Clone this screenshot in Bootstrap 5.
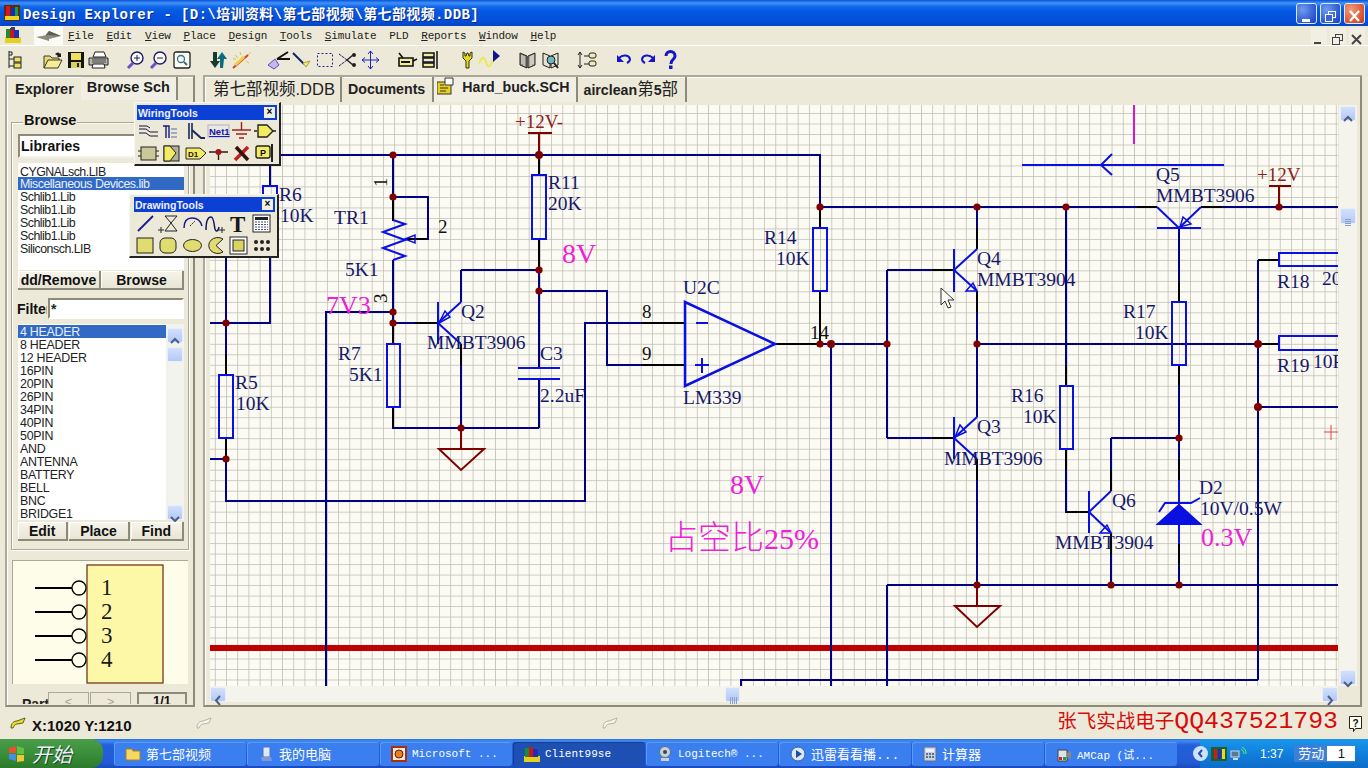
<!DOCTYPE html>
<html lang="zh">
<head>
  <meta charset="UTF-8" />
  <meta name="viewport" content="width=device-width, initial-scale=1" />
  <title>Design Explorer</title>
  <link href="https://cdn.jsdelivr.net/npm/bootstrap@5.3.3/dist/css/bootstrap.min.css" rel="stylesheet" />
  <style>
    html, body { margin: 0; width: 1368px; height: 768px; overflow: hidden; background: #ece9d8; }
    body { font-family: "Liberation Sans", "Noto Sans CJK SC", sans-serif; color: #111; position: relative; }
    .app-shell { width: 1368px; height: 768px; }

    .title-row { height: 26px; flex: none; background: linear-gradient(#0a52dc 0, #3f92f6 3px, #1065e8 7px, #0358e2 12px, #0450dc 20px, #0345c4 26px); color: #fff; padding-left: 4px; }
    .title-text { font: bold 14px "Liberation Mono", "Noto Sans CJK SC", monospace; letter-spacing: .38px; margin-left: 3px; text-shadow: 1px 1px #0a2a8a; white-space: nowrap; }
    .win-btn { width: 21px; height: 21px; border: 1px solid #dfe9fb; border-radius: 3px; background: radial-gradient(circle at 30% 30%, #6f9cf0, #2b56d0 70%, #1d3fb4); margin-left: 3px; display: block; }
    .win-btn.win-close { background: radial-gradient(circle at 30% 30%, #ee9c7c, #d9532c 70%, #b83a18); }
    .win-btns { margin-right: 3px; margin-left: auto; }

    .menu-row { height: 20px; flex: none; background: #ece9d8; border-bottom: 1px solid #fff; padding-left: 5px; }
    .arrow-box { width: 29px; height: 19px; margin-left: 13px; background: #fbfbf6; }
    .menu-item { font: 11px "Liberation Mono", monospace; letter-spacing: -.15px; color: #222; margin-left: 12.7px; }
    .menu-item.menu-first { margin-left: 5px; }
    .menu-row u { text-decoration-thickness: 1px; }
    .mdi-btn { width: 16px; height: 16px; background: #f1efe3; margin-left: 3px; display: block; }
    .mdi-btns { margin-left: auto; margin-right: 3px; }

    .tool-row { height: 29px; flex: none; padding: 0 0 2px 4px; background: #ece9d8; }
    .tool-row svg { width: 23px; height: 20px; flex: none; display: block; }
    .tool-gap { width: 14px; flex: none; }

    .work-row { height: 632px; flex: none; }
    .side-pane { width: 190px; height: 632px; margin-left: 5px; border: 2px solid; border-color: #aca899 #8c8a7a #8c8a7a #aca899; overflow: hidden; flex: none; box-shadow: inset 1px 1px #fff; }
    .side-tabs { height: 23px; padding-left: 3px; }
    .pane-tab { font: bold 14.5px/20px "Liberation Sans", sans-serif; padding: 2px 5px 0; color: #1c1c1c; white-space: nowrap; height: 23px; }
    .pane-tab.is-on { padding: 0 6px; background: #f1efe4; border-right: 2px solid #8c8a7a; margin-left: 2px; }
    .browse-group { width: 178px; height: 428px; margin: 22px 0 0 4px; border: 1px solid #aca899; box-shadow: inset 1px 1px #fff, 1px 1px #fff; padding: 11px 0 0 6px; position: relative; }
    .group-title { position: absolute; top: -11px; left: 11px; background: #ece9d8; padding: 0 1px; font: bold 14.5px "Liberation Sans", sans-serif; }
    .combo-box { width: 166px; height: 24px; background: #fff; border: 2px solid; border-color: #8c8a7a #f4f3ea #f4f3ea #8c8a7a; font: bold 14px "Liberation Sans", sans-serif; padding: 2px 1px; }
    .lib-list { width: 166px; height: 107px; margin-top: 5px; background: #fff; padding: 2px 0; border-radius: 0; }
    .lib-list .list-group-item, .part-list .list-group-item { border: 0; border-radius: 0; padding: 1px 3px 0 2px; height: 13px; line-height: 13px; font-size: 12.4px; letter-spacing: -.5px; background: transparent; color: #222; white-space: nowrap; }
    .part-list .list-group-item { letter-spacing: -.25px; }
    .lib-list .list-group-item.active, .part-list .list-group-item.active { background: #316ac5; color: #e8eefc; }
    .xp-btn { background: linear-gradient(#f6f5ec, #e8e5d4); border: 0; border-radius: 0; border-right: 2px solid #8c8a7a; border-bottom: 2px solid #8c8a7a; box-shadow: inset 1px 1px #fff; font: bold 14px "Liberation Sans", sans-serif; color: #111; padding: 0; height: 19px; line-height: 17px; }
    .btn-pair { margin-top: 1px; width: 166px; }
    .btn-pair .xp-btn { padding-top: 1px; }
    .filter-row { margin-top: 8px; height: 21px; width: 166px; }
    .filter-label { font: bold 14px "Liberation Sans", sans-serif; width: 30px; flex: none; overflow: hidden; margin-left: -1px; margin-right: 1px; white-space: nowrap; }
    .filter-input { height: 21px; padding: 0 1px; border-radius: 0; border: 2px solid; border-color: #8c8a7a #fff #fff #8c8a7a; font: bold 14px "Liberation Sans", sans-serif; background: #fff; }
    .part-box { width: 166px; height: 196px; margin-top: 5px; background: #fff; }
    .part-list { width: 148px; padding-top: 1px; flex: none; border-radius: 0; }
    .part-scroll { width: 18px; background: #f3f3ee; }
    .btn-row { margin-top: 2px; width: 166px; gap: 1px; }
    .btn-row .xp-btn { padding-top: 1px; }
    .preview-box { width: 176px; height: 124px; margin: 10px 0 0 5px; background: #fdfdea; border-left: 1px solid #aca899; border-top: 1px solid #aca899; }
    .preview-box svg { display: block; }
    .pager-row { height: 20px; overflow: hidden; padding: 8px 0 0 15px; align-items: flex-start; }
    .pager-txt { font: bold 14px/24px "Liberation Sans", sans-serif; width: 26px; color: #222; overflow: hidden; white-space: nowrap; }
    .pager-btn { width: 41px; height: 22px; border: 1px solid #aca899; background: #ece9d8; text-align: center; font-size: 13px; line-height: 18px; color: #a8a698; margin-right: 1px; }
    .pager-num { width: 50px; height: 22px; border: 2px solid #8c8a7a; border-bottom: 0; text-align: center; font: bold 13px/14px "Liberation Sans", sans-serif; margin-left: 5px; }

    .doc-pane { width: 1159px; height: 632px; margin-left: 8px; border: 2px solid; border-color: #aca899 #8c8a7a #8c8a7a #aca899; padding-left: 5px; flex: none; box-shadow: inset 1px 1px #fff; overflow: hidden; }
    .doc-tabs { height: 28px; }
    .doc-tab { font: bold 14.2px/21px "Liberation Sans", "Noto Sans CJK SC", sans-serif; color: #222; padding: 2px 7px 0 6px; height: 25px; border-right: 2px solid #8c8a7a; white-space: nowrap; }
    .doc-tab .cjk-part { font-weight: normal; font-size: 16.5px; }
    .doc-tab.tab-first { font: 16.5px/24px "Liberation Sans", "Noto Sans CJK SC", sans-serif; padding: 0 4px 0 3px; width: 132px; }
    .doc-tab.is-on { background: #f1efe4; padding: 0 6px 0 3px; display: flex; gap: 7px; align-items: flex-start; }
    .doc-body { height: 581px; }
    .sheet-svg { width: 1128px; height: 581px; display: block; flex: none; }
    .v-scroll { width: 18px; height: 581px; flex: none; background: #f4f4ec; margin-left: 1px; padding: 1px 1px 0; }
    .h-scroll { width: 1128px; height: 16px; background: #f4f4ec; }
    .sb-btn { width: 16px; height: 15px; background: linear-gradient(#d3e0fc, #b4c8f6); border: 1px solid #e9eefb; border-radius: 2px; display: block; flex: none; }
    .sb-thumb-v { margin-top: 87px; height: 16px; }
    .sb-thumb-h { margin-left: 499px; width: 15px; }
    .sb-track-end { margin-top: auto; }
    .v-scroll .sb-track-end { margin-bottom: 1px; }

    .status-row { height: 32px; flex: none; padding-left: 10px; }
    .coord-text { font: bold 15px "Liberation Sans", sans-serif; margin: 4px 0 0 6px; width: 164px; white-space: nowrap; }
    .status-gap { width: 390px; }
    .promo-text { font: 24.8px/28px "Liberation Mono", "Noto Sans CJK SC", monospace; color: #d80a0a; margin-left: auto; margin-bottom: 3px; white-space: nowrap; }
    .promo-text .cjk-part { font-size: 19.5px; }
    .help-ico { margin: 0 5px 0 10px; display: block; }

    .task-row { height: 29px; flex: none; background: linear-gradient(#2a6fe4 0, #3d8cf2 2px, #2460dc 6px, #225ad4 24px, #1a48b8); color: #fff; }
    .start-btn { width: 103px; height: 29px; background: linear-gradient(#4a9c4a, #3a8f3a 50%, #2c7a2c); border-radius: 0 12px 12px 0; font: italic 20px "Noto Sans CJK SC", sans-serif; padding-left: 8px; gap: 6px; color: #eef; text-shadow: 1px 1px #1c4c1c; flex: none; margin-right: 11px; }
    .task-btn { width: 132px; height: 24px; flex: none; margin-right: 1px; background: #3a7ef0; border-radius: 3px; box-shadow: inset 1px 1px #5a9af8; padding-left: 11px; gap: 5px; font: 11px "Liberation Mono", "Noto Sans CJK SC", monospace; white-space: nowrap; overflow: hidden; color: #fff; }
    .task-btn .cjk-txt { font-size: 13px; }
    .task-btn.is-on { background: #1e50b4; box-shadow: inset 1px 1px #143c90; }
    .tray-box { margin-left: auto; width: 168px; height: 29px; background: linear-gradient(#1a96ec, #1080dc 50%, #0e6cc8); gap: 3px; font: 12px "Liberation Sans", "Noto Sans CJK SC", sans-serif; flex: none; }
    .tray-arrow { width: 15px; height: 15px; border-radius: 50%; background: #cfe2fb; margin-left: -7px; }
    .tray-time { margin-left: 10px; }
    .ime-box { background: #3d7ed8; padding: 0 0 0 4px; height: 17px; line-height: 17px; font-size: 13px; width: 61px; margin-left: 8px; white-space: nowrap; flex: none; }
    .ime-num { background: #fff; color: #111; width: 28px; text-align: center; height: 15px; line-height: 15px; margin-top: 1px; margin-left: 3px; flex: none; }

    .float-win { position: absolute; background: #ece9d8; border: 1px solid #f8f7f0; border-right: 2px solid #222; border-bottom: 2px solid #222; padding: 2px; z-index: 5; }
    .float-wire { left: 134px; top: 102px; width: 147px; height: 64px; }
    .float-draw { left: 129px; top: 194px; width: 150px; height: 64px; padding-left: 4px; }
    .float-head { height: 15px; background: #0c40d4; color: #f0f2ff; font: bold 10.5px "Liberation Sans", sans-serif; padding: 0 1px; }
    .float-x { width: 11px; height: 11px; background: #f1efe3; color: #000; font: bold 10px/10px "Liberation Sans", sans-serif; text-align: center; margin-left: auto; margin-right: 1px; }
    .float-icons { display: grid; grid-template-columns: repeat(6, 23.3px); grid-auto-rows: 21.5px; padding: 1px 0 0 0; }
    .float-icons svg { width: 23px; height: 21px; display: block; }
  </style>
</head>
<body>
  <div class="app-shell d-flex flex-column">

    <div class="title-row d-flex align-items-center">
      <svg width="16" height="16" viewBox="0 0 16 16"><rect width="16" height="16" fill="#5c2a10"/><rect x="2" y="1" width="4" height="11" fill="#d81818"/><rect x="7" y="3" width="4" height="9" fill="#1828c8"/><rect x="1" y="11" width="14" height="4" fill="#e8d820"/><rect x="11" y="2" width="3" height="9" fill="#18a038"/></svg>
      <span class="title-text">Design Explorer - [D:\培训资料\第七部视频\第七部视频.DDB]</span>
      <div class="win-btns d-flex">
        <span class="win-btn"><svg width="19" height="19" viewBox="0 0 19 19"><rect x="5" y="12" width="8" height="3" fill="#fff"/></svg></span>
        <span class="win-btn"><svg width="19" height="19" viewBox="0 0 19 19" fill="none" stroke="#fff"><rect x="7.5" y="4.5" width="7" height="6"/><rect x="4.5" y="7.5" width="7" height="7" fill="#3a64d8"/></svg></span>
        <span class="win-btn win-close"><svg width="19" height="19" viewBox="0 0 19 19" stroke="#fff" stroke-width="2.4"><path d="M5 4l9 10M14 4l-9 10"/></svg></span>
      </div>
    </div>

    <div class="menu-row d-flex align-items-center">
      <svg width="16" height="17" viewBox="0 0 16 17"><rect y="10" width="16" height="6" fill="#e4d020"/><rect x="1" y="2" width="4" height="9" fill="#1c8c30"/><rect x="5" y="1" width="4" height="10" fill="#c81818"/><rect x="9" y="3" width="5" height="8" fill="#2030b0"/><rect x="6" y="0" width="4" height="3" fill="#304080"/></svg>
      <span class="arrow-box d-flex align-items-center justify-content-center"><svg width="27" height="14" viewBox="0 0 27 14"><path d="M1 8l9-1 4-5 12 5-12 3v2z" fill="#8c8a7e"/><path d="M1 8l9-1 4-5 12 5-13-1z" fill="#5e5c50"/></svg></span>
      <span class="menu-item menu-first"><u>F</u>ile</span>
      <span class="menu-item"><u>E</u>dit</span>
      <span class="menu-item"><u>V</u>iew</span>
      <span class="menu-item"><u>P</u>lace</span>
      <span class="menu-item"><u>D</u>esign</span>
      <span class="menu-item"><u>T</u>ools</span>
      <span class="menu-item"><u>S</u>imulate</span>
      <span class="menu-item">PLD</span>
      <span class="menu-item"><u>R</u>eports</span>
      <span class="menu-item"><u>W</u>indow</span>
      <span class="menu-item"><u>H</u>elp</span>
      <div class="mdi-btns d-flex">
        <span class="mdi-btn"><svg width="16" height="16" viewBox="0 0 16 16"><rect x="3" y="10" width="7" height="2" fill="#444"/></svg></span>
        <span class="mdi-btn"><svg width="16" height="16" viewBox="0 0 16 16" fill="none" stroke="#444"><rect x="5.5" y="2.5" width="7" height="6"/><rect x="2.5" y="5.5" width="7" height="7" fill="#f1efe3"/></svg></span>
        <span class="mdi-btn"><svg width="16" height="16" viewBox="0 0 16 16" stroke="#444" stroke-width="2"><path d="M3 3l9 9M12 3l-9 9"/></svg></span>
      </div>
    </div>

    <div class="tool-row d-flex align-items-center">
      <svg viewBox="0 0 23 20" fill="none"><path d="M5 1v17M5 2h3v3H5M5 9h6M5 16h6" stroke="#222"/><rect x="10" y="7" width="7" height="5" fill="#f0e060" stroke="#222"/><rect x="10" y="13" width="7" height="5" fill="#f0e060" stroke="#222"/></svg>
      <span class="tool-gap"></span>
      <svg viewBox="0 0 23 20"><path d="M3 6h6l2 2h7v3H7l-4 7z" fill="#e8d878" stroke="#3c3c20"/><path d="M3 18l4-8h14l-4 8z" fill="#f6ec98" stroke="#3c3c20"/><path d="M14 4c2-2 4-2 5 0l1-1v4h-4l1-1c-1-1-2-1-3-2z" fill="#202020"/></svg>
      <svg viewBox="0 0 23 20"><rect x="4" y="2" width="16" height="16" fill="#151515"/><rect x="7" y="3" width="10" height="7" fill="#f0e060"/><rect x="7" y="12" width="10" height="6" fill="#d8d060"/><rect x="13" y="13" width="2" height="4" fill="#222"/></svg>
      <svg viewBox="0 0 23 20"><path d="M6 7l2-5h9l2 5z" fill="#fff" stroke="#222"/><path d="M2 8h19v7H2z" fill="#b8b8b0" stroke="#222"/><path d="M6 14l-1 4h13l-1-4z" fill="#fff" stroke="#222"/><path d="M5 10h14M5 12h14" stroke="#444"/></svg>
      <span class="tool-gap"></span>
      <svg viewBox="0 0 23 20" fill="none"><circle cx="13" cy="8" r="6" stroke="#1c1c68" stroke-width="1.4" fill="#fbfbf3"/><path d="M10 8h6M13 5v6" stroke="#1c1c68"/><path d="M9 13l-5 5" stroke="#6a50c8" stroke-width="3"/></svg>
      <svg viewBox="0 0 23 20" fill="none"><circle cx="13" cy="8" r="6" stroke="#1c1c68" stroke-width="1.4" fill="#fbfbf3"/><path d="M10 8h6" stroke="#1c1c68"/><path d="M9 13l-5 5" stroke="#6a50c8" stroke-width="3"/></svg>
      <svg viewBox="0 0 23 20" fill="none"><rect x="4" y="2" width="16" height="16" rx="2" stroke="#222" stroke-width="1.3" fill="#fbfbf3"/><circle cx="11" cy="9" r="3.5" stroke="#347090" stroke-width="1.3"/><path d="M14 12l3 3" stroke="#347090" stroke-width="2"/></svg>
      <span class="tool-gap"></span>
      <svg viewBox="0 0 23 20"><path d="M6 2h4v9h3l-5 7-5-7h3z" fill="#143c28"/><path d="M16 18h-3V9h-3l5-7 5 7h-3z" fill="#0c6c80"/></svg>
      <svg viewBox="0 0 23 20" fill="none"><path d="M3 18L18 5" stroke="#d04030" stroke-width="2"/><path d="M5 15l9-8" stroke="#f0d040" stroke-width="3"/><path d="M5 5l3 3M10 2l1 3M19 13l-3-2M3 9h3M21 2l-3 3" stroke="#e0c040"/></svg>
      <span class="tool-gap"></span>
      <svg viewBox="0 0 23 20" fill="none"><path d="M1 15l7-6 4 6-5 4z" fill="#c8b8f0" stroke="#6048b8"/><path d="M10 9l11-7M10 9h13" stroke="#111" stroke-width="2"/></svg>
      <svg viewBox="0 0 23 20" fill="none"><path d="M3 3l11 11" stroke="#14206c" stroke-width="2"/><path d="M13 13l3 4 4-6z" fill="#f0ec70" stroke="#a8a050"/></svg>
      <svg viewBox="0 0 23 20" fill="none"><rect x="4.5" y="3.5" width="15" height="13" stroke="#2020a0" stroke-dasharray="2 2"/></svg>
      <svg viewBox="0 0 23 20" fill="none"><path d="M3 4l8 6-8 6" stroke="#888"/><path d="M3 4l8 6M3 16l8-6" stroke="#2020a0" stroke-dasharray="2 2"/><path d="M11 10l6-5M11 10l6 5" stroke="#222" stroke-width="1.5"/><circle cx="18" cy="5" r="2" fill="#222"/><circle cx="18" cy="15" r="2" fill="#222"/></svg>
      <svg viewBox="0 0 23 20" fill="none" stroke="#2020c8"><path d="M11.5 1v18M3 10h17"/><path d="M9 4l2.5-3L14 4M9 16l2.5 3 2.5-3M6 7.5L3 10l3 2.5M17 7.5l3 2.500-3 2.500"/></svg>
      <span class="tool-gap"></span>
      <svg viewBox="0 0 23 20" fill="none"><path d="M3 8h14v8H3z" fill="#f4ec98" stroke="#111" stroke-width="1.6"/><path d="M5 12h9" stroke="#111" stroke-width="2"/><path d="M3 3l4 5M17 11l4-2" stroke="#111" stroke-width="1.6"/></svg>
      <svg viewBox="0 0 23 20" fill="none" stroke="#111" stroke-width="1.5"><rect x="4" y="3" width="11" height="4" fill="#f4ec98"/><rect x="4" y="8" width="11" height="4" fill="#e8e8d8"/><rect x="4" y="13" width="11" height="4" fill="#f4ec98"/><path d="M18 1v18"/></svg>
      <span class="tool-gap"></span>
      <svg viewBox="0 0 23 20"><path d="M7 2v6l3 3v7h3v-7l3-3V2l-2 1v3h-1l-1-3h-1l-1 3H9V3z" fill="#e8d820" stroke="#353510"/></svg>
      <svg viewBox="0 0 23 20" fill="none"><path d="M0 14c3-8 5-8 7-2s4 6 7-2" stroke="#ece850" stroke-width="2"/><path d="M14 0l7 6-7 6z" fill="#12128c"/></svg>
      <span class="tool-gap"></span>
      <svg viewBox="0 0 23 20"><path d="M4 3l7 3v12l-7-3z" fill="#8c8a7a" stroke="#222"/><path d="M19 3l-7 3v12l7-3z" fill="#a8a698" stroke="#222"/><path d="M6 5v9M8 6v10M17 5v9M15 6v10" stroke="#eee"/></svg>
      <svg viewBox="0 0 23 20" fill="none"><path d="M4 3l7 3v12l-7-3zM19 3l-7 3v12l7-3z" stroke="#222" fill="#e4e2d0"/><circle cx="12" cy="10" r="4" fill="#6fb6c0" stroke="#222"/><path d="M15 13l4 5" stroke="#222" stroke-width="2"/></svg>
      <span class="tool-gap"></span>
      <svg viewBox="0 0 23 20" fill="none" stroke="#222"><path d="M4 2v16M2 5l2-3 2 3M2 15l2 3 2-3"/><path d="M8 6h5M8 14h5"/><rect x="13" y="3" width="7" height="5" rx="2" fill="#f0ecb0"/><rect x="13" y="11" width="7" height="5" rx="2" fill="#f0ecb0"/></svg>
      <span class="tool-gap"></span>
      <svg viewBox="0 0 23 20" fill="none"><path d="M6 8c4-4 10-3 11 1 0 2-1 3-3 4" stroke="#1414c8" stroke-width="2"/><path d="M4 5v7h7z" fill="#1414c8"/></svg>
      <svg viewBox="0 0 23 20" fill="none"><path d="M17 8C13 4 7 5 6 9c0 2 1 3 3 4" stroke="#1414c8" stroke-width="2"/><path d="M19 5v7h-7z" fill="#1414c8"/></svg>
      <svg viewBox="0 0 23 20" fill="none"><path d="M7 6c0-6 9-6 9 0 0 4-4 3-4 8" stroke="#1414c8" stroke-width="3"/><rect x="10" y="15.500" width="3.500" height="3.500" fill="#1414c8"/></svg>
    </div>

    <div class="work-row d-flex">
      <aside class="side-pane">
        <div class="side-tabs d-flex align-items-start">
          <span class="pane-tab">Explorer</span>
          <span class="pane-tab is-on">Browse Sch</span>
        </div>
        <div class="browse-group">
          <span class="group-title">Browse</span>
          <div class="combo-box">Libraries</div>
          <div class="lib-list list-group">
            <div class="list-group-item">CYGNALsch.LIB</div>
            <div class="list-group-item active">Miscellaneous Devices.lib</div>
            <div class="list-group-item">Schlib1.Lib</div>
            <div class="list-group-item">Schlib1.Lib</div>
            <div class="list-group-item">Schlib1.Lib</div>
            <div class="list-group-item">Schlib1.Lib</div>
            <div class="list-group-item">Siliconsch.LIB</div>
          </div>
          <div class="btn-pair d-flex">
            <button class="btn xp-btn w-50">dd/Remove</button>
            <button class="btn xp-btn w-50">Browse</button>
          </div>
          <div class="filter-row d-flex align-items-center">
            <span class="filter-label">Filter</span>
            <input class="form-control filter-input" value="*" />
          </div>
          <div class="part-box d-flex">
            <div class="part-list list-group">
              <div class="list-group-item active">4 HEADER</div>
              <div class="list-group-item">8 HEADER</div>
              <div class="list-group-item">12 HEADER</div>
              <div class="list-group-item">16PIN</div>
              <div class="list-group-item">20PIN</div>
              <div class="list-group-item">26PIN</div>
              <div class="list-group-item">34PIN</div>
              <div class="list-group-item">40PIN</div>
              <div class="list-group-item">50PIN</div>
              <div class="list-group-item">AND</div>
              <div class="list-group-item">ANTENNA</div>
              <div class="list-group-item">BATTERY</div>
              <div class="list-group-item">BELL</div>
              <div class="list-group-item">BNC</div>
              <div class="list-group-item">BRIDGE1</div>
            </div>
            <div class="part-scroll d-flex flex-column align-items-center pt-1">
              <span class="sb-btn"><svg width="14" height="13" viewBox="0 0 14 13" fill="none" stroke="#4a5e88" stroke-width="2"><path d="M3 8l4-4 4 4"/></svg></span>
              <span class="sb-btn mt-1"></span>
              <span class="sb-btn sb-track-end"><svg width="14" height="13" viewBox="0 0 14 13" fill="none" stroke="#4a5e88" stroke-width="2"><path d="M3 5l4 4 4-4"/></svg></span>
            </div>
          </div>
          <div class="btn-row d-flex">
            <button class="btn xp-btn flex-fill">Edit</button>
            <button class="btn xp-btn flex-fill">Place</button>
            <button class="btn xp-btn flex-fill">Find</button>
          </div>
        </div>
        <div class="preview-box">
          <svg width="176" height="124" viewBox="12 560 176 124">
            <rect x="86" y="564" width="76" height="118" fill="#fdf8a8" stroke="#7a3418" stroke-width="1.300"/>
            <g stroke="#000" stroke-width="2" fill="#fdfdea">
              <path d="M34 587h37M34 611h37M34 635h37M34 659h37"/>
              <circle cx="78" cy="587" r="7" stroke-width="1.300"/><circle cx="78" cy="611" r="7" stroke-width="1.300"/><circle cx="78" cy="635" r="7" stroke-width="1.300"/><circle cx="78" cy="659" r="7" stroke-width="1.300"/>
            </g>
            <g font-family="Liberation Serif, serif" font-size="23" fill="#1a1a1a">
              <text x="100" y="594">1</text><text x="100" y="618">2</text><text x="100" y="642">3</text><text x="100" y="666">4</text>
            </g>
          </svg>
        </div>
        <div class="pager-row d-flex">
          <span class="pager-txt">Part</span>
          <span class="pager-btn">&lt;</span>
          <span class="pager-btn">&gt;</span>
          <span class="pager-num">1/1</span>
        </div>
      </aside>

      <section class="doc-pane">
        <div class="doc-tabs d-flex align-items-start">
          <span class="doc-tab tab-first">第七部视频.DDB</span>
          <span class="doc-tab">Documents</span>
          <span class="doc-tab is-on">
            <svg width="18" height="18" viewBox="0 0 18 18"><rect y="5" width="14" height="12" fill="#e8d020" stroke="#333"/><path d="M8 1h8v7H8z" fill="#fff" stroke="#333"/><path d="M3 8h4M3 11h8M3 14h6" stroke="#333"/></svg>
            <span>Hard_buck.SCH</span>
          </span>
          <span class="doc-tab">airclean<span class="cjk-part">第</span>5<span class="cjk-part">部</span></span>
        </div>
        <div class="doc-body d-flex">
          <svg class="sheet-svg" viewBox="210 105 1128 581" fill="none">
            <defs>
              <pattern id="sheetGrid" patternUnits="userSpaceOnUse" x="214.790" y="102.550" width="11.210" height="10.490">
                <path d="M0 0V10.490M0 0H11.210" stroke="#bcbcb2" stroke-width="1.500"/>
              </pattern>
            </defs>
            <rect x="210" y="105" width="1128" height="581" fill="#fbfbf3"/>
            <rect x="210" y="105" width="1128" height="581" fill="url(#sheetGrid)"/>

            <path d="M210 648H1338" stroke="#c00000" stroke-width="6"/>
            <path d="M1134 105V144" stroke="#e010d0" stroke-width="2"/>
            <path d="M1022 165H1224M1112 154l-11 11 11 10" stroke="#0a10e0" stroke-width="2"/>
            <path d="M1331 425v15M1324 432h14" stroke="#e84040" stroke-width="1"/>

            <!-- nets -->
            <path stroke="#000080" stroke-width="2" d="
              M210 155H820V228
              M820 207H1157M1201 207H1338
              M977 207V249M977 291V417M977 459V585
              M1066 207V386M1066 449V512H1089
              M775 344H887M887 270V438M887 270H954M887 438H954
              M977 344H1279
              M1258 260V680M1258 260H1279M1258 407H1338
              M741 686V680H1258
              M831 344V686M887 585V686M887 585H1338
              M226 258V375M226 438V501H585V323H685
              M210 323H270V258M210 459H226M270 165V186
              M393 155V221M393 197H428V239H405M393 260V344M393 407V428H539
              M326 686V312H393M393 323H438
              M539 155V175M539 239V368M539 379V428
              M461 270H539M461 270V302M461 344V449
              M539 291H607V365H685
              M1179 228V302M1179 365V505M1179 524V585
              M1111 438H1179M1111 438V491M1111 533V585
              M820 291V344"/>

            <!-- pin stubs -->
            <path stroke="#000" stroke-width="2" d="
              M539 155V175M539 239V270
              M393 197V221M393 323V344M393 407V428
              M415 323H438M461 344V365
              M226 354V375M226 438V459
              M820 207V228M820 291V344
              M642 323H685M642 365H685M775 344H820
              M932 270H954M932 438H954
              M977 228V249M977 291V312M977 459V480
              M1137 207H1157M1201 207H1222
              M1179 281V302M1179 365V386
              M1258 260H1279M1258 344H1279
              M1066 365V386M1066 449V470M1066 512H1089
              M1111 470V491M1111 533V554
              M1179 459V480M1179 544V565
              M405 239H428"/>

            <!-- parts -->
            <g stroke="#0a10e0" stroke-width="2">
              <rect x="219" y="375" width="14" height="63" fill="none"/>
              <rect x="263" y="186" width="14" height="63"/>
              <rect x="532" y="175" width="14" height="64"/>
              <rect x="387" y="344" width="13" height="63"/>
              <rect x="813" y="228" width="14" height="63"/>
              <rect x="1172" y="302" width="14" height="63"/>
              <rect x="1060" y="386" width="13" height="63"/>
              <path d="M1338 253H1279V266H1338M1338 336H1279V350H1338"/>
              <path d="M393 220l12 4-22 8 22 8-22 8 22 8-12 4" stroke-width="2"/>
              <path d="M405 239l10-4v8z" stroke-width="1.500"/>
              <path d="M518 368H560M518 379H560"/>
              <path d="M685 302V386L775 344Z" stroke-width="2.500"/>
              <path d="M696 323H708M702 358V373M695 365H709" stroke-width="2"/>
              <!-- Q2 -->
              <path d="M438 302V344M438 323L461 302M438 323L461 344"/>
              <path d="M439 323l11-6-5-6z" stroke-width="1.500"/>
              <!-- Q3 -->
              <path d="M954 417V459M954 438L977 417M954 438L977 459"/>
              <path d="M955 437l11-5-6-7z" stroke-width="1.500"/>
              <!-- Q4 -->
              <path d="M954 249V292M954 270L977 249M954 270L977 291"/>
              <path d="M977 291h-11l7-8z" stroke-width="1.500"/>
              <!-- Q5 -->
              <path d="M1157 228H1201M1157 207L1179 228M1201 207L1179 228"/>
              <path d="M1180 227l3-10 8 7z" stroke-width="1.500"/>
              <!-- Q6 -->
              <path d="M1089 491V533M1089 512L1111 491M1089 512L1111 533"/>
              <path d="M1111 533h-11l7-8z" stroke-width="1.500"/>
              <!-- D2 -->
              <path d="M1179 480V505M1179 524V544M1159 512l6-9h26l9-5"/>
              <path d="M1158 524H1200L1179 505Z" fill="#0a10e0"/>
            </g>

            <!-- supply and ground -->
            <g stroke="#7f0000" stroke-width="2">
              <path d="M539 155V133M528 133H552M1279 207V186M1269 186H1291"/>
              <path d="M461 428V449M439 449H484L461 470ZM977 585V606M955 606H1000L977 627Z"/>
            </g>

            <!-- junctions -->
            <g fill="#800000">
              <circle cx="393" cy="155" r="3.600"/><circle cx="539" cy="155" r="4"/>
              <circle cx="393" cy="197" r="3.600"/><circle cx="820" cy="207" r="3.600"/>
              <circle cx="977" cy="207" r="3.600"/><circle cx="1066" cy="207" r="3.600"/>
              <circle cx="1279" cy="207" r="3.600"/><circle cx="539" cy="270" r="3.600"/>
              <circle cx="539" cy="291" r="3.600"/><circle cx="393" cy="312" r="3.600"/>
              <circle cx="393" cy="323" r="3.600"/><circle cx="226" cy="323" r="3.600"/>
              <circle cx="820" cy="344" r="3.600"/><circle cx="831" cy="344" r="4"/>
              <circle cx="887" cy="344" r="3.600"/><circle cx="977" cy="344" r="3.600"/>
              <circle cx="1258" cy="344" r="4"/><circle cx="1258" cy="407" r="4"/>
              <circle cx="461" cy="428" r="3.600"/><circle cx="1179" cy="438" r="3.600"/>
              <circle cx="226" cy="459" r="3.600"/><circle cx="977" cy="585" r="3.600"/>
              <circle cx="1111" cy="585" r="3.600"/><circle cx="1179" cy="585" r="3.600"/>
            </g>

            <!-- labels -->
            <g font-family="Liberation Serif, serif" font-size="19.500" fill="#17176a" stroke="none">
              <text x="279" y="201">R6</text><text x="280" y="222">10K</text>
              <text x="334" y="224">TR1</text><text x="345" y="276">5K1</text>
              <text x="548" y="189">R11</text><text x="548" y="210">20K</text>
              <text x="461" y="318">Q2</text><text x="427" y="349">MMBT3906</text>
              <text x="338" y="360">R7</text><text x="349" y="381">5K1</text>
              <text x="235" y="389">R5</text><text x="236" y="410">10K</text>
              <text x="540" y="360">C3</text><text x="540" y="402">2.2uF</text>
              <text x="683" y="294">U2C</text><text x="683" y="404">LM339</text>
              <text x="764" y="244">R14</text><text x="776" y="265">10K</text>
              <text x="977" y="265">Q4</text><text x="977" y="286">MMBT3904</text>
              <text x="1156" y="181">Q5</text><text x="1156" y="202">MMBT3906</text>
              <text x="1277" y="288">R18</text><text x="1322" y="285">20</text>
              <text x="1123" y="318">R17</text><text x="1135" y="339">10K</text>
              <text x="1277" y="372">R19</text><text x="1313" y="368">10R</text>
              <text x="1011" y="402">R16</text><text x="1023" y="423">10K</text>
              <text x="977" y="433">Q3</text><text x="944" y="465">MMBT3906</text>
              <text x="1112" y="507">Q6</text><text x="1055" y="549">MMBT3904</text>
              <text x="1199" y="494">D2</text><text x="1200" y="515">10V/0.5W</text>
            </g>
            <g font-family="Liberation Serif, serif" font-size="19" fill="#111" stroke="none">
              <text x="438" y="233">2</text><text x="642" y="318">8</text><text x="642" y="360">9</text><text x="810" y="339">14</text>
              <text transform="rotate(-90 387 187)" x="387" y="187">1</text>
              <text transform="rotate(-90 387 303)" x="387" y="303">3</text>
            </g>
            <g font-family="Liberation Serif, serif" font-size="19" fill="#8c2020" stroke="none">
              <text x="515" y="128">+12V-</text><text x="1257" y="181">+12V</text>
            </g>
            <g font-family="Liberation Serif, 'Noto Sans CJK SC', serif" fill="#ee20d8" stroke="none">
              <text x="326" y="314" font-size="26">7V3</text>
              <text x="562" y="263" font-size="28">8V</text>
              <text x="730" y="494" font-size="28">8V</text>
              <text x="1201" y="546" font-size="26">0.3V</text>
              <text x="665" y="549" font-size="33" font-weight="300">占空比<tspan font-size="30">25%</tspan></text>
            </g>
            <!-- mouse cursor -->
            <path d="M941 288v17l4-4 3 7 3-1-3-7h6z" fill="#fbfbf3" stroke="#333" stroke-width="1"/>
          </svg>
          <div class="v-scroll d-flex flex-column">
            <span class="sb-btn"><svg width="14" height="13" viewBox="0 0 14 13" fill="none" stroke="#4a5e88" stroke-width="2"><path d="M3 8l4-4 4 4"/></svg></span>
            <span class="sb-btn sb-thumb-v"><svg width="14" height="14" viewBox="0 0 14 14" stroke="#8aa0d0"><path d="M4 4.500h6M4 6.500h6M4 8.500h6M4 10.500h6"/></svg></span>
            <span class="sb-btn sb-track-end"><svg width="14" height="13" viewBox="0 0 14 13" fill="none" stroke="#4a5e88" stroke-width="2"><path d="M3 5l4 4 4-4"/></svg></span>
          </div>
        </div>
        <div class="h-scroll d-flex align-items-center">
          <span class="sb-btn"><svg width="14" height="13" viewBox="0 0 14 13" fill="none" stroke="#4a5e88" stroke-width="2"><path d="M9 2L5 6.500 9 11"/></svg></span>
          <span class="sb-btn sb-thumb-h"><svg width="14" height="13" viewBox="0 0 14 13" stroke="#8aa0d0"><path d="M4.500 3v7M6.500 3v7M8.500 3v7M10.500 3v7"/></svg></span>
          <span class="sb-btn ms-auto"><svg width="14" height="13" viewBox="0 0 14 13" fill="none" stroke="#4a5e88" stroke-width="2"><path d="M5 2l4 4.500L5 11"/></svg></span>
        </div>
      </section>
    </div>

    <div class="status-row d-flex align-items-center">
      <svg width="16" height="12" viewBox="0 0 16 12"><path d="M1 11c0-5 3-7 6-7l8-3-2 5-6 1c-2 0-3 2-4 4z" fill="#e8e020" stroke="#3c3c10" stroke-width=".8"/></svg>
      <span class="coord-text">X:1020 Y:1210</span>
      <svg width="16" height="12" viewBox="0 0 16 12"><path d="M1 11c0-5 3-7 6-7l8-3-2 5-6 1c-2 0-3 2-4 4z" fill="#f4f3ea" stroke="#a8a698" stroke-width=".8"/></svg>
      <span class="status-gap"></span>
      <svg width="16" height="12" viewBox="0 0 16 12"><path d="M1 11c0-5 3-7 6-7l8-3-2 5-6 1c-2 0-3 2-4 4z" fill="#f4f3ea" stroke="#a8a698" stroke-width=".8"/></svg>
      <span class="promo-text"><span class="cjk-part">张飞实战电子</span>QQ437521793</span>
      <svg class="help-ico" width="15" height="17" viewBox="0 0 15 17"><path d="M1.500 1.500h12v12h-6l-2 3v-3h-4z" fill="#fffff0" stroke="#222"/><text x="4.500" y="11.500" font-size="10" font-weight="bold" font-family="Liberation Sans" fill="#111">?</text></svg>
    </div>

    <div class="task-row d-flex align-items-center">
      <div class="start-btn d-flex align-items-center">
        <svg width="18" height="18" viewBox="0 0 18 18"><path d="M1 3l7-2v7H1z" fill="#e85030"/><path d="M9 1l7 2v6H9z" fill="#60c040"/><path d="M1 9h7v7l-7-2z" fill="#4090e8"/><path d="M9 10h7v6l-7 1z" fill="#f0c830"/></svg>
        <span>开始</span>
      </div>
      <div class="task-btn d-flex align-items-center"><svg width="16" height="14" viewBox="0 0 16 14"><path d="M1 2h6l1 2h7v9H1z" fill="#f4d860" stroke="#a88020"/></svg><span class="cjk-txt">第七部视频</span></div>
      <div class="task-btn d-flex align-items-center"><svg width="16" height="16" viewBox="0 0 16 16"><rect x="5" y="1" width="7" height="10" fill="#dfe8f8" stroke="#5070c0"/><path d="M3 11h10l1 4H4z" fill="#8098d8"/></svg><span class="cjk-txt">我的电脑</span></div>
      <div class="task-btn d-flex align-items-center"><svg width="16" height="16" viewBox="0 0 16 16"><rect x="1" y="1" width="14" height="14" fill="#f4e8d8" stroke="#a83010" stroke-width="2"/><circle cx="8" cy="8" r="4" fill="#e88020" stroke="#602010"/></svg><span>Microsoft ...</span></div>
      <div class="task-btn is-on d-flex align-items-center"><svg width="16" height="16" viewBox="0 0 16 16"><rect y="10" width="16" height="6" fill="#e4d020"/><rect x="1" y="2" width="4" height="9" fill="#1c8c30"/><rect x="5" y="1" width="4" height="10" fill="#c81818"/><rect x="9" y="3" width="5" height="8" fill="#2030b0"/></svg><span>Client99se</span></div>
      <div class="task-btn d-flex align-items-center"><svg width="16" height="16" viewBox="0 0 16 16"><circle cx="8" cy="6" r="5.500" fill="#c8d0d8" stroke="#687078"/><circle cx="8" cy="6" r="2" fill="#304860"/><rect x="4" y="12" width="8" height="3" fill="#c8d0d8"/></svg><span>Logitech® ...</span></div>
      <div class="task-btn d-flex align-items-center"><svg width="16" height="16" viewBox="0 0 16 16"><circle cx="8" cy="8" r="7" fill="#dce8f8" stroke="#3860a0"/><path d="M6 4l6 4-6 4z" fill="#1850a0"/></svg><span class="cjk-txt">迅雷看看播...</span></div>
      <div class="task-btn d-flex align-items-center"><svg width="14" height="16" viewBox="0 0 14 16"><rect x="1" y="1" width="12" height="14" fill="#c8d4e4" stroke="#607088"/><rect x="3" y="3" width="8" height="3" fill="#eef2f8"/><path d="M3 8h2M6 8h2M9 8h2M3 11h2M6 11h2M9 11h2" stroke="#405068" stroke-width="1.500"/></svg><span class="cjk-txt">计算器</span></div>
      <div class="task-btn d-flex align-items-center"><svg width="16" height="16" viewBox="0 0 16 16"><rect x="2" y="4" width="9" height="11" fill="#dce4e8" stroke="#444"/><path d="M11 7l4-2v8l-4-2z" fill="#888"/><rect x="3" y="11" width="3" height="3" fill="#d82020"/><rect x="7" y="11" width="3" height="3" fill="#20a040"/></svg><span>AMCap (试...</span></div>
      <div class="tray-box d-flex align-items-center">
        <span class="tray-arrow d-flex align-items-center justify-content-center"><svg width="11" height="11" viewBox="0 0 11 11" fill="none" stroke="#2050a8" stroke-width="2"><path d="M7 2L4 5.500 7 9"/></svg></span>
        <svg width="16" height="14" viewBox="0 0 16 14"><rect width="16" height="14" fill="#1c6030"/><rect x="3" y="2" width="3" height="10" fill="#d81818"/><rect x="7" y="2" width="3" height="10" fill="#2030c0"/><rect x="11" y="2" width="3" height="10" fill="#e8d820"/></svg>
        <svg width="17" height="14" viewBox="0 0 17 14"><rect x="1" y="4" width="8" height="6" fill="#5a7a90" stroke="#c8d8e8"/><rect x="3" y="11" width="5" height="2" fill="#c8d8e8"/><path d="M11 2c2 1 3 3 3 5M12 0c3 1 4 4 4 7" stroke="#60f060" fill="none"/></svg>
        <span class="tray-time">1:37</span>
        <div class="ime-box d-flex"><span>劳动</span><span class="ime-num">1</span></div>
      </div>
    </div>
  </div>

  <div class="float-win float-wire">
    <div class="float-head d-flex align-items-center"><span>WiringTools</span><span class="float-x">×</span></div>
    <div class="float-icons">
      <svg viewBox="0 0 23 21" fill="none" stroke="#14143c"><path d="M2 8h7l4 3h8M2 12h7l4 3h8M2 5h8l3 2"/></svg>
      <svg viewBox="0 0 23 21" fill="none" stroke="#1a1a78"><path d="M3 5h6v12M6 5v12" stroke-width="1.400"/><path d="M11 8h6M11 12h6M11 16h6" stroke="#8896b8" stroke-width="1.500"/></svg>
      <svg viewBox="0 0 23 21" fill="none" stroke="#1a2860"><path d="M5 2v16M8 2v16" stroke-width="1.600"/><path d="M8 9l9 8h4" stroke-width="2"/></svg>
      <svg viewBox="0 0 23 21"><rect x="1" y="4" width="21" height="12" fill="#ece9d8" stroke="#a8b0d8"/><text x="2" y="14" font-family="Liberation Sans" font-size="9.500" font-weight="bold" fill="#1414b4" text-decoration="underline">Net1</text></svg>
      <svg viewBox="0 0 23 21" fill="none" stroke="#a02020"><path d="M11.500 1v8M2 9h19M6 13h11M9 17h5" stroke-width="1.400"/></svg>
      <svg viewBox="0 0 23 21"><path d="M1 10h3M20 10h3" stroke="#222" stroke-width="1.400"/><path d="M5 4h9l6 6-6 6H5z" fill="#f4ec60" stroke="#222" stroke-width="1.400"/></svg>

      <svg viewBox="0 0 23 21"><path d="M1 8h3M1 13h3M19 8h3M19 13h3" stroke="#222"/><rect x="4" y="4" width="15" height="13" fill="#c8c898" stroke="#222"/></svg>
      <svg viewBox="0 0 23 21"><rect x="4" y="3" width="15" height="15" fill="#b0b098" stroke="#222"/><path d="M4 3h6l6 7-6 8H4z" fill="#f4ec60" stroke="#222"/></svg>
      <svg viewBox="0 0 23 21"><path d="M2 5h14l6 5-6 6H2z" fill="#f4ec60" stroke="#222"/><text x="4" y="14" font-family="Liberation Sans" font-size="8" font-weight="bold" fill="#111">D1</text></svg>
      <svg viewBox="0 0 23 21" fill="none"><path d="M2 9h19M11.500 9v8" stroke="#222" stroke-width="1.400"/><circle cx="11.500" cy="9" r="3" fill="#a01818"/></svg>
      <svg viewBox="0 0 23 21" fill="none" stroke="#c02020" stroke-width="3.500"><path d="M5 17L18 4" /><path d="M6 4l12 13" stroke="#341010"/></svg>
      <svg viewBox="0 0 23 21"><rect x="3" y="3" width="14" height="12" rx="2" fill="#f4ec60" stroke="#222" stroke-width="1.400"/><text x="7" y="13" font-family="Liberation Sans" font-size="9" font-weight="bold" fill="#111">P</text><path d="M19 1v18" stroke="#222" stroke-width="2"/></svg>
    </div>
  </div>

  <div class="float-win float-draw">
    <div class="float-head d-flex align-items-center"><span>DrawingTools</span><span class="float-x">×</span></div>
    <div class="float-icons">
      <svg viewBox="0 0 23 21" fill="none"><path d="M4 18L19 3" stroke="#1a1a90" stroke-width="1.800"/></svg>
      <svg viewBox="0 0 23 21" fill="none" stroke="#222"><path d="M8 3h12l-6 7 6 8H8l6-8z"/><path d="M1 17h6M4 14v6" stroke="#2a2a2a"/></svg>
      <svg viewBox="0 0 23 21" fill="none" stroke="#1a1a90"><path d="M3 15c0-7 3-10 8-10 6 0 9 4 10 8" stroke-width="1.500"/><path d="M9 13l5-5" stroke-dasharray="2 1" stroke="#222"/></svg>
      <svg viewBox="0 0 23 21" fill="none" stroke="#1a1a60"><path d="M2 17c0-8 2-13 5-13s3 8 4 12c1 3 3 3 4-2" stroke-width="1.500"/><path d="M15 17h6M18 14v6" stroke="#222"/></svg>
      <svg viewBox="0 0 23 21"><text x="3" y="19" font-family="Liberation Serif" font-size="23" font-weight="bold" fill="#181818">T</text></svg>
      <svg viewBox="0 0 23 21"><rect x="3" y="2" width="17" height="17" fill="#fff" stroke="#222"/><rect x="5" y="4" width="13" height="3" fill="#222"/><path d="M5 9h13M5 11.500h13M5 14h13M5 16.500h13" stroke="#405080" stroke-dasharray="2 1"/></svg>

      <svg viewBox="0 0 23 21"><rect x="3" y="3" width="16" height="15" fill="#e0dc70" stroke="#222"/></svg>
      <svg viewBox="0 0 23 21"><rect x="3" y="3" width="16" height="15" rx="5" fill="#e0dc70" stroke="#222"/></svg>
      <svg viewBox="0 0 23 21"><ellipse cx="11.500" cy="10.500" rx="9" ry="6" fill="#e0dc70" stroke="#222"/></svg>
      <svg viewBox="0 0 23 21"><path d="M19 4a9 8 0 1 0 0 13L12 10.500z" fill="#e0dc70" stroke="#222"/></svg>
      <svg viewBox="0 0 23 21"><rect x="3" y="2" width="17" height="17" fill="#fff" stroke="#222"/><rect x="6" y="5" width="11" height="11" fill="#d8d460" stroke="#222"/></svg>
      <svg viewBox="0 0 23 21" fill="#222"><circle cx="6" cy="7" r="2"/><circle cx="12" cy="7" r="2"/><circle cx="18" cy="7" r="2"/><circle cx="6" cy="14" r="2"/><circle cx="12" cy="14" r="2"/><circle cx="18" cy="14" r="2"/></svg>
    </div>
  </div>

  <script src="https://cdn.jsdelivr.net/npm/bootstrap@5.3.3/dist/js/bootstrap.bundle.min.js"></script>
</body>
</html>
